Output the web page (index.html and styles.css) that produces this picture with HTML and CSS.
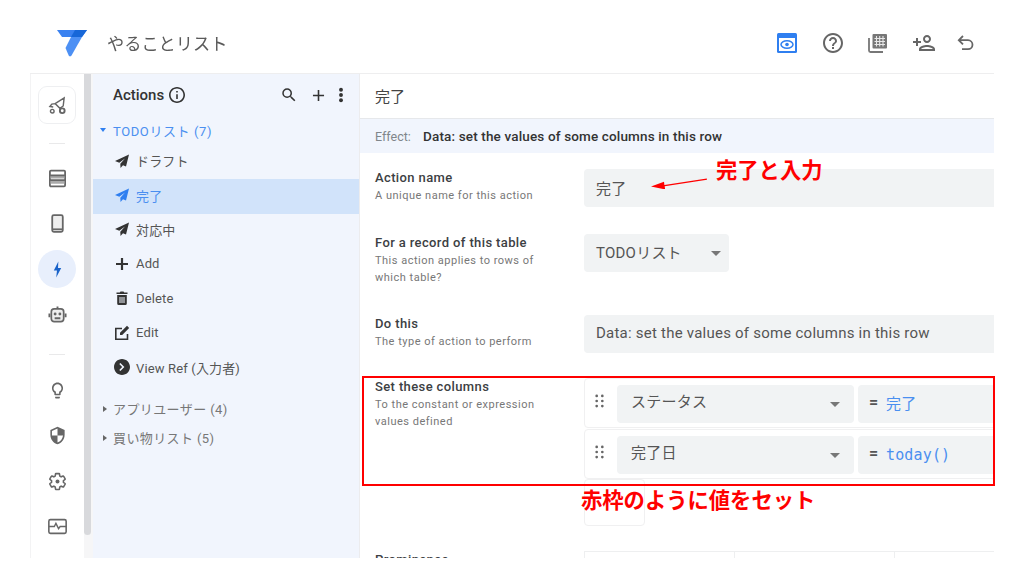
FILE: index.html
```html
<!DOCTYPE html>
<html lang="ja">
<head>
<meta charset="utf-8">
<title>やることリスト</title>
<link rel="stylesheet" href="styles.css">
</head>
<body>
<div class="page">
  <div class="app">
    <header class="topbar">
      <svg class="logo" viewBox="0 0 32 28"><path fill="#3b82f0" d="M1 1h30l-5 7H6z"/><path fill="#1767d8" d="M19 1h12l-5 7h-11z"/><path fill="#4d90f4" d="M26 8 15.500 26.500c-.7 1.200-2.300 1.100-2.800 0L9.500 19 15 8z"/></svg>
      <h1 class="app-title">やることリスト</h1>
      <div class="top-actions">
        <svg class="ti ti-preview" viewBox="0 0 20 20"><rect width="20" height="20" rx="1.500" fill="#2f7ff0"/><rect x="2" y="5" width="16" height="13" fill="#fff"/><ellipse cx="10" cy="11.500" rx="6" ry="3.800" fill="none" stroke="#2f7ff0" stroke-width="1.500"/><circle cx="10" cy="11.500" r="1.800" fill="#2f7ff0"/></svg>
        <svg class="ti" viewBox="2 2 20 20"><path fill="#666" d="M11 18h2v-2h-2v2zm1-16C6.480 2 2 6.480 2 12s4.480 10 10 10 10-4.480 10-10S17.520 2 12 2zm0 18c-4.410 0-8-3.590-8-8s3.590-8 8-8 8 3.590 8 8-3.590 8-8 8zm0-14c-2.210 0-4 1.790-4 4h2c0-1.100.9-2 2-2s2 .9 2 2c0 2-3 1.750-3 5h2c0-2.250 3-2.500 3-5 0-2.210-1.790-4-4-4z"/></svg>
        <svg class="ti" viewBox="0 0 20 20"><path fill="none" stroke="#777" stroke-width="1.800" d="M1 5v12.500a1.500 1.500 0 0 0 1.500 1.500H15"/><rect x="4.500" y="1" width="14.500" height="14.500" rx="1" fill="#777"/><path stroke="#e8e8e8" stroke-width="1.100" d="M8.500 3v10.500M11.700 3v10.500M15 3v10.500M6.500 5.500h10.500M6.500 8.500h10.500M6.500 11.500h10.500"/></svg>
        <svg class="ti ti-wide" viewBox="1 4 22 16"><path fill="#666" d="M15 12c2.210 0 4-1.790 4-4s-1.790-4-4-4-4 1.790-4 4 1.790 4 4 4zm0-6c1.100 0 2 .9 2 2s-.9 2-2 2-2-.9-2-2 .9-2 2-2zm0 8c-2.670 0-8 1.340-8 4v2h16v-2c0-2.660-5.330-4-8-4zm-6 4c.22-.72 3.310-2 6-2 2.700 0 5.800 1.290 6 2H9zm-3-3v-3h3v-2H6V7H4v3H1v2h3v3h2z"/></svg>
        <svg class="ti ti-undo" viewBox="0 0 18 18"><path fill="none" stroke="#666" stroke-width="1.800" d="M6 2 1.800 6.200 6 10.400M2 6.200h9a4.500 4.500 0 0 1 0 9H5"/></svg>
      </div>
    </header>
    <div class="workspace">
      <nav class="rail">
        <div class="rail-tile"><svg class="ri" viewBox="0 0 20 20"><path fill="none" stroke="#666" stroke-width="1.500" d="M7.500 8 17 2l-1 8.500-3.500 2.500-5-5zM7.500 8 4 8.500 2 11l3.500.5M12.500 13v1"/><circle cx="4.500" cy="16" r="1.900" fill="none" stroke="#666" stroke-width="1.500"/><circle cx="15" cy="15.500" r="2.500" fill="none" stroke="#666" stroke-width="2"/></svg></div>
        <div class="rail-sep rail-sep-a"></div>
        <div class="rail-group">
          <div class="rail-item"><svg class="ri" viewBox="0 0 18 18"><rect x="1.800" y="1.500" width="14.400" height="15" rx="1" fill="#fff" stroke="#666" stroke-width="1.700"/><path fill="#aaa" d="M2.500 6h13v3h-13zM2.500 11h13v3h-13z"/><path stroke="#666" stroke-width="1.500" d="M2 6h14M2 10.500h14"/></svg></div>
          <div class="rail-item"><svg class="ri" viewBox="0 0 18 18"><rect x="4" y="1" width="10" height="16" rx="1.500" fill="#eee" stroke="#666" stroke-width="1.700"/><path stroke="#666" stroke-width="1.700" d="M4 14.500h10"/></svg></div>
          <div class="rail-item rail-active"><svg class="ri" viewBox="0 0 18 18"><path fill="#1a63c9" d="M9.800 1.500 5.500 10h3L7.800 16.500 12.500 7.500h-3z"/></svg></div>
          <div class="rail-item"><svg class="ri" viewBox="0 0 20 20"><rect x="3.500" y="4" width="13" height="13.500" rx="3" fill="#eee" stroke="#666" stroke-width="1.800"/><path stroke="#666" stroke-width="2" d="M10 1.500V4M1.500 9v4M18.500 9v4M7 14h6"/><circle cx="7.500" cy="9.500" r="1.500" fill="#666"/><circle cx="12.500" cy="9.500" r="1.500" fill="#666"/></svg></div>
        </div>
        <div class="rail-sep rail-sep-b"></div>
        <div class="rail-group">
          <div class="rail-item"><svg class="ri" viewBox="0 0 24 24"><path fill="#666" d="M9 21c0 .55.45 1 1 1h4c.55 0 1-.45 1-1v-1H9v1zm3-19C8.140 2 5 5.140 5 9c0 2.380 1.190 4.470 3 5.740V17c0 .55.45 1 1 1h6c.55 0 1-.45 1-1v-2.260c1.810-1.270 3-3.360 3-5.740 0-3.860-3.140-7-7-7zm2.850 11.100-.85.6V16h-4v-2.300l-.85-.6C7.800 12.160 7 10.630 7 9c0-2.760 2.240-5 5-5s5 2.240 5 5c0 1.630-.8 3.160-2.150 4.100z"/></svg></div>
          <div class="rail-item"><svg class="ri" viewBox="0 0 24 24"><path fill="#666" d="M12 1 3 5v6c0 5.550 3.840 10.740 9 12 5.160-1.260 9-6.450 9-12V5l-9-4zm0 10.990h7c-.53 4.120-3.280 7.790-7 8.940V12H5V6.300l7-3.110v8.800z"/></svg></div>
          <div class="rail-item"><svg class="ri" viewBox="0 0 24 24"><path fill="none" stroke="#666" stroke-width="2" d="M19.430 12.980c.04-.32.07-.64.07-.98s-.03-.66-.07-.98l2.110-1.650c.19-.15.24-.42.12-.64l-2-3.460c-.12-.22-.39-.3-.61-.22l-2.490 1c-.52-.4-1.080-.73-1.690-.98l-.38-2.650C14.460 2.180 14.250 2 14 2h-4c-.25 0-.46.18-.49.42l-.38 2.650c-.61.25-1.170.59-1.690.98l-2.490-1c-.23-.09-.49 0-.61.22l-2 3.460c-.13.22-.07.49.12.64l2.110 1.650c-.04.32-.07.65-.07.98s.03.66.07.98l-2.110 1.650c-.19.15-.24.42-.12.64l2 3.460c.12.22.39.3.61.22l2.490-1c.52.4 1.080.73 1.690.98l.38 2.650c.03.24.24.42.49.42h4c.25 0 .46-.18.49-.42l.38-2.650c.61-.25 1.170-.59 1.690-.98l2.490 1c.23.09.49 0 .61-.22l2-3.460c.12-.22.07-.49-.12-.64l-2.110-1.650z"/><circle cx="12" cy="12" r="2.500" fill="#666"/></svg></div>
          <div class="rail-item"><svg class="ri" viewBox="0 0 18 18"><rect x="0.800" y="2.500" width="16.400" height="13" rx="1.500" fill="none" stroke="#666" stroke-width="1.500"/><path fill="none" stroke="#666" stroke-width="1.300" d="M1 9h5l1.500-3 2.500 5 1.500-2h6"/></svg></div>
        </div>
      </nav>
      <div class="scrollbar"><div class="thumb"></div></div>
      <aside class="panel">
        <div class="panel-head">
          <span class="panel-title">Actions</span>
          <svg class="info" viewBox="2 2 20 20"><path fill="#333" d="M11 7h2v2h-2zm0 4h2v6h-2zm1-9C6.480 2 2 6.480 2 12s4.480 10 10 10 10-4.480 10-10S17.520 2 12 2zm0 18c-4.410 0-8-3.590-8-8s3.590-8 8-8 8 3.590 8 8-3.590 8-8 8z"/></svg>
          <div class="panel-tools">
            <svg class="pt pt-search" viewBox="0 0 24 24"><path fill="#333" d="M15.500 14h-.79l-.28-.27A6.470 6.470 0 0 0 16 9.500 6.500 6.500 0 1 0 9.500 16c1.610 0 3.090-.59 4.230-1.570l.27.28v.79l5 4.990L20.490 19l-4.990-5zm-6 0C7.010 14 5 11.990 5 9.500S7.010 5 9.500 5 14 7.010 14 9.500 11.990 14 9.500 14z"/></svg>
            <svg class="pt pt-add" viewBox="0 0 24 24"><path fill="#333" d="M19 13h-6v6h-2v-6H5v-2h6V5h2v6h6v2z"/></svg>
            <svg class="pt pt-more" viewBox="0 0 8 24"><circle cx="4" cy="5" r="2.600" fill="#333"/><circle cx="4" cy="12" r="2.600" fill="#333"/><circle cx="4" cy="19" r="2.600" fill="#333"/></svg>
          </div>
        </div>
        <div class="tree-group tree-open"><span class="caret caret-down"></span>TODOリスト (7)</div>
        <ul class="items">
          <li class="item"><svg class="ic" viewBox="0 0 16 16"><path fill="#333" d="M15 1.500 1 8l4.300 1.800L11 5.500 6.300 10.700 6.500 15 9 12.200l3 1.300z"/></svg>ドラフト</li>
          <li class="item item-active"><svg class="ic" viewBox="0 0 16 16"><path fill="#2f7ff0" d="M15 1.500 1 8l4.300 1.800L11 5.500 6.300 10.700 6.500 15 9 12.200l3 1.300z"/></svg>完了</li>
          <li class="item"><svg class="ic" viewBox="0 0 16 16"><path fill="#333" d="M15 1.500 1 8l4.300 1.800L11 5.500 6.300 10.700 6.500 15 9 12.200l3 1.300z"/></svg>対応中</li>
          <li class="item"><svg class="ic" viewBox="0 0 16 16"><path fill="#333" d="M6.900 2h2.200v4.900H14v2.200H9.100V14H6.900V9.100H2V6.900h4.900z"/></svg>Add</li>
          <li class="item"><svg class="ic" viewBox="0 0 16 16"><path fill="#333" d="M2.500 2.500h3.300l.7-1h3l.7 1h3.300V4h-11zM3.200 5h9.600v8.500a1.500 1.500 0 0 1-1.500 1.500H4.700a1.500 1.500 0 0 1-1.500-1.500z"/><path stroke="#f1f5fd" d="M6 7v6M8 7v6M10 7v6"/></svg>Delete</li>
          <li class="item"><svg class="ic" viewBox="0 0 16 16"><path fill="none" stroke="#333" stroke-width="1.600" d="M13.500 9v5.200H1.800V3.500H8"/><path fill="#333" d="M13 .8l2.200 2.200-7 7H6V7.800z"/></svg>Edit</li>
          <li class="item"><svg class="ic" viewBox="2 2 20 20"><path fill="#333" d="M12 2C6.480 2 2 6.480 2 12s4.480 10 10 10 10-4.480 10-10S17.520 2 12 2zm-2 15-1.400-1.400 3.600-3.600-3.600-3.600L10 7l5 5-5 5z"/></svg>View Ref (入力者)</li>
        </ul>
        <div class="tree-group tree-a"><span class="caret"></span>アプリユーザー (4)</div>
        <div class="tree-group tree-b"><span class="caret"></span>買い物リスト (5)</div>
      </aside>
      <main class="main">
        <div class="main-title">完了</div>
        <div class="effect"><span class="effect-key">Effect:</span><span class="effect-val">Data: set the values of some columns in this row</span></div>
        <section class="row row-name">
          <div class="lab"><div class="lab-t">Action name</div><div class="lab-d">A unique name for this action</div></div>
          <div class="field field-full">完了</div>
        </section>
        <section class="row row-table">
          <div class="lab"><div class="lab-t">For a record of this table</div><div class="lab-d">This action applies to rows of<br>which table?</div></div>
          <div class="field field-table">TODOリスト<span class="drop"></span></div>
        </section>
        <section class="row row-do">
          <div class="lab"><div class="lab-t">Do this</div><div class="lab-d">The type of action to perform</div></div>
          <div class="field field-full">Data: set the values of some columns in this row</div>
        </section>
        <section class="row row-set">
          <div class="lab"><div class="lab-t">Set these columns</div><div class="lab-d">To the constant or expression<br>values defined</div></div>
          <div class="cards">
            <div class="card">
              <svg class="drag" viewBox="0 0 8 12"><g fill="#666"><circle cx="1.500" cy="1.500" r="1.200"/><circle cx="6.500" cy="1.500" r="1.200"/><circle cx="1.500" cy="6" r="1.200"/><circle cx="6.500" cy="6" r="1.200"/><circle cx="1.500" cy="10.500" r="1.200"/><circle cx="6.500" cy="10.500" r="1.200"/></g></svg>
              <div class="field field-col">ステータス<span class="drop"></span></div>
              <div class="field field-val"><span class="eq">=</span><span class="val">完了</span></div>
            </div>
            <div class="card">
              <svg class="drag" viewBox="0 0 8 12"><g fill="#666"><circle cx="1.500" cy="1.500" r="1.200"/><circle cx="6.500" cy="1.500" r="1.200"/><circle cx="1.500" cy="6" r="1.200"/><circle cx="6.500" cy="6" r="1.200"/><circle cx="1.500" cy="10.500" r="1.200"/><circle cx="6.500" cy="10.500" r="1.200"/></g></svg>
              <div class="field field-col">完了日<span class="drop"></span></div>
              <div class="field field-val"><span class="eq">=</span><span class="val val-mono">today()</span></div>
            </div>
            <div class="add-box"></div>
          </div>
        </section>
        <section class="row row-prom">
          <div class="lab"><div class="lab-t">Prominence</div></div>
          <div class="seg"><div class="seg-a"></div><div class="seg-b"></div><div class="seg-c"></div></div>
        </section>
      </main>
    </div>
  </div>
  <div class="note note-name">完了と入力</div>
  <svg class="note-arrow" viewBox="0 0 56 11"><path fill="#f00" d="M0 8.500 13 3.800l.4 3.100L55.800.4l.2 1.400L13.700 8.300l.4 3.100z"/></svg>
  <div class="red-box"></div>
  <div class="note note-set">赤枠のように値をセット</div>
</div>
</body>
</html>
```
FILE: styles.css
```css
* { box-sizing: border-box; }
html, body { margin: 0; padding: 0; background: #fff; }
body { font-family: Roboto, "Noto Sans CJK JP", sans-serif; color: #3c4043; }
.page { position: relative; width: 1024px; height: 576px; overflow: hidden; filter: blur(0.35px); }
.app { margin-left: 30px; width: 964px; height: 558px; display: flex; flex-direction: column; overflow: hidden; }

.topbar { height: 74px; flex: none; display: flex; align-items: center; padding: 13px 19px 0 26px; border-bottom: 1px solid #eeeeef; }
.logo { width: 32px; height: 28px; flex: none; }
.app-title { margin: 0 0 1px 19px; font-size: 17.200px; font-weight: 400; color: #5a5a5a; }
.top-actions { margin-left: auto; display: flex; align-items: center; gap: 25px; }
.ti { width: 20px; height: 20px; display: block; }
.ti-preview { margin-right: 1px; }
.ti-wide { width: 22px; height: 16px; }
.ti-undo { width: 18px; height: 18px; margin-left: -3px; }

.workspace { flex: 1; display: flex; min-height: 0; }
.rail { width: 54px; flex: none; border-left: 1px solid #f3f3f4; padding: 12px 1px 0 0; display: flex; flex-direction: column; align-items: center; }
.rail-group { display: flex; flex-direction: column; gap: 7.500px; }
.rail-item, .rail-tile { width: 38px; height: 38px; display: flex; align-items: center; justify-content: center; }
.rail-tile { border: 1px solid #eeeff1; border-radius: 9px; }
.rail-active { background: #e8effc; border-radius: 50%; }
.ri { width: 19px; height: 19px; display: block; }
.rail-sep { width: 16px; height: 1px; background: #e9e9ea; flex: none; }
.rail-sep-a { margin: 19px 0 15px; }
.rail-sep-b { margin: 20px 0 16.500px; }

.scrollbar { width: 9px; flex: none; background: #f6f6f7; }
.thumb { width: 7px; height: 461px; background: #d8d9dc; border-radius: 0 0 4px 4px; }

.panel { width: 267px; flex: none; background: #f1f5fd; border-right: 1px solid #ececee; }
.panel-head { height: 42px; display: flex; align-items: center; padding: 0 15px 0 20px; }
.panel-title { font-size: 15px; font-weight: 500; color: #333; }
.info { width: 16px; height: 16px; margin-left: 5px; }
.panel-tools { margin-left: auto; display: flex; align-items: center; }
.pt { display: block; }
.pt-search { width: 18px; height: 18px; }
.pt-add { width: 19px; height: 19px; margin-left: 11.500px; }
.pt-more { width: 6px; height: 20px; margin-left: 10px; }

.tree-group { display: flex; align-items: center; font-size: 13px; color: #777; height: 20px; padding: 0 0 2px 9px; letter-spacing: 0.4px; }
.tree-open { color: #4a8ff0; margin-top: 5px; letter-spacing: 0.6px; }
.tree-a { margin-top: 14px; }
.tree-b { margin-top: 9px; }
.caret { width: 0; height: 0; border-top: 3.500px solid transparent; border-bottom: 3.500px solid transparent; border-left: 4px solid #666; margin-right: 6px; margin-left: 1px; }
.caret-down { border-left: 3.500px solid transparent; border-right: 3.500px solid transparent; border-top: 4px solid #2f7ff0; border-bottom: 0; margin-right: 7px; margin-left: -2px; }

.items { list-style: none; margin: 4px 0 0; padding: 0; }
.item { height: 34.400px; display: flex; align-items: center; gap: 6px; padding: 0 0 3px 21px; font-size: 13px; color: #555; letter-spacing: 0.15px; }
.item-active { background: #d1e3fa; color: #4a8ff0; }
.ic { width: 16px; height: 16px; flex: none; }

.main { flex: 1; min-width: 0; overflow: hidden; background: #fff; }
.main-title { height: 45px; display: flex; align-items: center; padding: 0 0 2px 15px; font-size: 15px; color: #444; border-bottom: 1px solid #e6e8eb; }
.effect { height: 34px; background: #f1f5fd; display: flex; align-items: center; padding-left: 15px; font-size: 12.500px; }
.effect-key { color: #80868b; width: 48px; }
.effect-val { font-weight: 500; color: #333; font-size: 13.500px; letter-spacing: 0.15px; }

.row { display: flex; padding-left: 15px; }
.lab { width: 209px; flex: none; }
.lab-t { font-size: 13px; font-weight: 500; line-height: 18px; color: #3c4043; letter-spacing: 0.38px; }
.lab-d { font-size: 11px; line-height: 17px; color: #777; letter-spacing: 0.5px; }
.row-name { padding-top: 16px; height: 81px; }
.row-table { height: 81px; }
.row-do { height: 63px; }
.row-set { height: 173px; }
.row-prom { height: 40px; }
.field { height: 38px; background: #f1f3f4; border-radius: 4px; display: flex; align-items: center; font-size: 15px; letter-spacing: 0.23px; color: #555; flex: none; }
.field-full { width: 440px; padding: 0 0 2px 12px; }
.field-table { width: 145px; padding: 0 0 4px 12px; }
.field-col { width: 237px; padding: 0 0 8px 14px; }
.field-val { width: 180px; padding: 0 0 3px 11px; margin-left: 4px; color: #4a8ff0; }
.eq { color: #555; font-weight: 700; font-size: 16px; margin: 0 8px 1px 0; width: 9px; }
.val { color: #4a8ff0; }
.val-mono { font-family: "DejaVu Sans Mono", monospace; font-size: 15px; letter-spacing: 0.15px; position: relative; top: 1px; }
.drop { margin-left: auto; width: 0; height: 0; border-left: 5px solid transparent; border-right: 5px solid transparent; border-top: 5px solid #777; }
.field-table .drop { margin: 4px 8px 0 auto; }
.field-col .drop { margin: 8px 14px 0 auto; }

.cards { display: flex; flex-direction: column; gap: 1px; }
.card { width: 420px; height: 50px; border: 1px solid #f0f0f1; border-radius: 4px; padding: 6px 0 0 10px; display: flex; align-items: flex-start; }
.drag { width: 9px; height: 14px; margin: 9px 13px 0 0; flex: none; }
.add-box { width: 61px; height: 47px; border: 1px solid #f0f0f1; border-radius: 4px; margin-top: -1px; }

.seg { display: flex; height: 30px; }
.seg-a, .seg-b, .seg-c { border: 1px solid #eeeff0; height: 30px; border-right: 0; }
.seg-a { width: 150px; }
.seg-b { width: 160px; }
.seg-c { width: 120px; }

.note { position: absolute; font-family: "Noto Sans CJK JP", sans-serif; font-weight: 700; font-size: 21.300px; line-height: 28px; color: #f00; white-space: nowrap; }
.note-name { left: 716px; top: 155px; }
.note-set { left: 581px; top: 485px; }
.note-arrow { position: absolute; left: 651px; top: 178px; width: 56px; height: 11px; }
.red-box { position: absolute; left: 362px; top: 376px; width: 633px; height: 110px; border: 2px solid #f00; }
```
